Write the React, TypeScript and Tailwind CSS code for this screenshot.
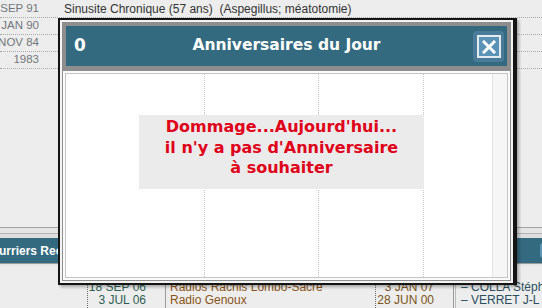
import React from "react";

const topRows = [
  { date: "18 SEP 91", text: "Sinusite Chronique (57 ans)  (Aspegillus; méatotomie)" },
  { date: "JAN 90", text: "" },
  { date: "NOV 84", text: "" },
  { date: "1983", text: "" },
];

const bottomRows = [
  { d1: "18 SEP 06", t: "Radios Rachis Lombo-Sacré", d2: "3 JAN 07", n: "– COLLA Stéphane" },
  { d1: "3 JUL 06", t: "Radio Genoux", d2: "28 JUN 00", n: "– VERRET J-L" },
];

export default function App() {
  return (
    <div
      className="relative w-[542px] h-[308px] overflow-hidden bg-[#ededed] flex flex-col"
      style={{ fontFamily: '"Liberation Sans", Arial, sans-serif' }}
    >
      {/* top list */}
      <div className="pt-[1px]">
        {topRows.map((r, i) => (
          <div
            key={i}
            className="flex h-[17px] items-center border-b border-dotted border-[#a9a9a9]"
          >
            <div className="w-[42px] shrink-0 flex justify-end overflow-hidden pr-[3px]">
              <span className="whitespace-nowrap text-[#73777c] text-[11.5px]">{r.date}</span>
            </div>
            <div className="ml-[22px] whitespace-pre text-[#333] text-[12px]">{r.text}</div>
          </div>
        ))}
      </div>

      <div className="h-[160px]" />

      {/* separators */}
      <div className="h-[1px] bg-[#a4a4a4]" />
      <div className="h-[5px] bg-[#e4e4e4]" />
      <div className="h-[1px] bg-[#b4b4b4]" />
      <div className="h-[4px] bg-[#dedede]" />
      <div className="h-[25px] bg-[#346a80] flex items-center overflow-hidden">
        <span className="ml-[-17px] text-white font-bold text-[12px] whitespace-nowrap">
          Courriers Reçus
        </span>
        <div className="ml-auto mr-[-8px] h-[15px] w-[10px] rounded-[3px] bg-[#5e94b5]" />
      </div>
      <div className="h-[1px] bg-[#9a9a9a]" />
      <div className="h-[2px] bg-[#e6e6e6]" />

      {/* bottom list */}
      <div className="flex flex-1 text-[12px]">
        <div className="w-[88px] shrink-0 border-r border-dotted border-[#6f6f6f]" />
        <div className="w-[78px] shrink-0 border-r border-[#9c9c9c] pt-[15px] pr-[19px]">
          {bottomRows.map((r, i) => (
            <div key={i} className="h-[13.5px] leading-[13.5px] text-right text-[#2e5e52]">
              {r.d1}
            </div>
          ))}
        </div>
        <div className="w-[210px] shrink-0 border-r border-dotted border-[#6f6f6f] pt-[15px] pl-[4px]">
          {bottomRows.map((r, i) => (
            <div key={i} className="h-[13.5px] leading-[13.5px] whitespace-nowrap text-[#8a5418]">
              {r.t}
            </div>
          ))}
        </div>
        <div className="w-[78px] shrink-0 border-r border-[#9c9c9c] pt-[15px] pr-[19px]">
          {bottomRows.map((r, i) => (
            <div key={i} className="h-[13.5px] leading-[13.5px] text-right text-[#7a5420]">
              {r.d2}
            </div>
          ))}
        </div>
        <div className="w-[2px] shrink-0 border-r border-[#bdbdbd]" />
        <div className="pt-[15px] pl-[5px]">
          {bottomRows.map((r, i) => (
            <div key={i} className="h-[13.5px] leading-[13.5px] whitespace-nowrap text-[#2b4d5c]">
              {r.n}
            </div>
          ))}
        </div>
      </div>

      {/* dialog */}
      <div className="absolute left-[58px] top-[18px] w-[459px] h-[267px] border-l-2 border-t-2 border-r-[4px] border-b-2 border-[#141414] shadow-[2px_2px_3px_rgba(0,0,0,0.3)] bg-[#f3f3f3] p-[2px] flex flex-col">
        {/* title */}
        <div className="h-[48px] shrink-0 border-[4px] border-[#8d8d8d] bg-[#346a80] flex items-center relative">
          <span
            className="ml-[8px] text-white font-bold text-[17px]"
            style={{ fontFamily: '"DejaVu Sans", Verdana, sans-serif' }}
          >
            0
          </span>
          <span
            className="absolute left-0 right-0 text-center text-white font-bold text-[15.5px] pointer-events-none"
            style={{ fontFamily: '"DejaVu Sans", Verdana, sans-serif' }}
          >
            Anniversaires du Jour
          </span>
          <div className="ml-auto mr-[3px] mt-[1px] w-[31px] h-[31px] rounded-[4px] bg-[#4a7c9a] pl-[4px] pt-[4px]">
            <div className="w-[24px] h-[23px] border-2 border-[#e2eaf0] bg-[#5b93b7] flex items-center justify-center">
              <svg width="14" height="14" viewBox="0 0 14 14">
                <path d="M2 2 L12 12 M12 2 L2 12" stroke="#ffffff" strokeWidth="3" strokeLinecap="square" />
              </svg>
            </div>
          </div>
        </div>

        {/* content */}
        <div className="flex-1 border border-[#8f8f8f] bg-[#fbfbfb] p-[2px] flex">
          <div className="flex-1 border border-[#c4c4c4] bg-white flex relative">
            <div className="w-[139px] shrink-0 border-r border-dotted border-[#c9c9c9]" />
            <div className="w-[114px] shrink-0 border-r border-dotted border-[#c9c9c9]" />
            <div className="w-[105px] shrink-0 border-r border-dotted border-[#c9c9c9]" />
            <div className="flex-1" />
            <div className="w-[15px] shrink-0 border-l border-[#e3e3e3] bg-[#f6f6f6]" />

            <div
              className="absolute left-[73px] top-[41px] w-[285px] h-[74px] bg-[#ebebeb] pt-[2px] text-center text-[#e0001a] font-bold text-[16px] leading-[20.5px]"
              style={{ fontFamily: '"DejaVu Sans", Verdana, sans-serif' }}
            >
              <div>Dommage...Aujourd'hui...</div>
              <div>il n'y a pas d'Anniversaire</div>
              <div>à souhaiter</div>
            </div>
          </div>
        </div>
      </div>
    </div>
  );
}
